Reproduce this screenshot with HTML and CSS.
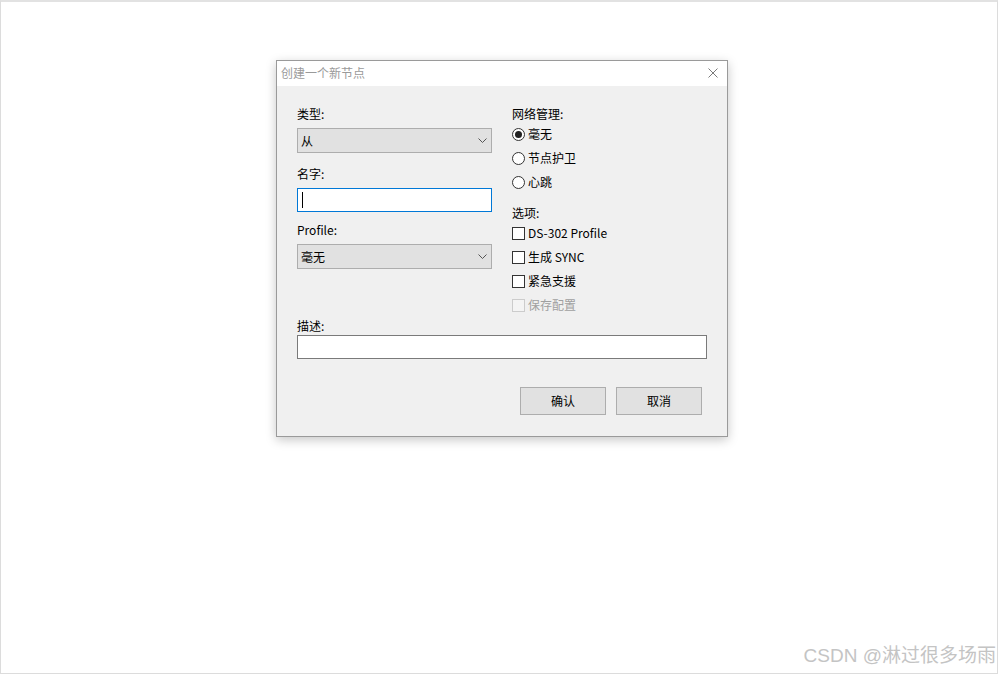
FILE: index.html
```html
<!DOCTYPE html>
<html lang="zh-CN">
<head>
<meta charset="utf-8">
<title>创建一个新节点</title>
<link rel="stylesheet" href="styles.css">
</head>
<body>
<div class="frame">
  <div class="dialog">
    <div class="titlebar">
      <span class="title">创建一个新节点</span>
      <svg class="close" width="10" height="10" viewBox="0 0 10 10"><path d="M0.5 0.5 L9.5 9.5 M9.5 0.5 L0.5 9.5" stroke="#7a7a7a" stroke-width="1" fill="none"/></svg>
    </div>
    <div class="body">
      <div class="cols">
        <div class="col-left">
          <div class="label">类型:</div>
          <div class="select"><span>从</span><svg class="chev" width="9" height="5" viewBox="0 0 9 5"><path d="M0.5 0.5 L4.5 4.5 L8.5 0.5" stroke="#555" stroke-width="1" fill="none"/></svg></div>
          <div class="label l2">名字:</div>
          <div class="input focus"><span class="caret"></span></div>
          <div class="label l3">Profile:</div>
          <div class="select"><span>毫无</span><svg class="chev" width="9" height="5" viewBox="0 0 9 5"><path d="M0.5 0.5 L4.5 4.5 L8.5 0.5" stroke="#555" stroke-width="1" fill="none"/></svg></div>
        </div>
        <div class="col-right">
          <div class="label">网络管理:</div>
          <div class="opt"><span class="radio checked"></span>毫无</div>
          <div class="opt"><span class="radio"></span>节点护卫</div>
          <div class="opt"><span class="radio"></span>心跳</div>
          <div class="label l4">选项:</div>
          <div class="opt"><span class="check"></span>DS-302 Profile</div>
          <div class="opt"><span class="check"></span>生成 SYNC</div>
          <div class="opt"><span class="check"></span>紧急支援</div>
          <div class="opt disabled"><span class="check"></span>保存配置</div>
        </div>
      </div>
      <div class="label desc-label">描述:</div>
      <div class="input desc"></div>
      <div class="buttons">
        <div class="btn">确认</div>
        <div class="btn">取消</div>
      </div>
    </div>
  </div>
  <div class="watermark">CSDN @淋过很多场雨</div>
</div>
</body>
</html>
```

FILE: styles.css
```css
* { box-sizing: border-box; }
html, body { margin: 0; padding: 0; background: #fff; }
body {
  font-family: "Noto Sans CJK SC", sans-serif;
  font-size: 12px;
  color: #000;
}
.frame {
  width: 998px;
  height: 674px;
  border: 1px solid #dcdcdc;
  border-top: 2px solid #e2e2e2;
  display: flex;
  flex-direction: column;
  align-items: flex-start;
}
.dialog {
  margin-top: 58px;
  margin-left: 275px;
  width: 452px;
  height: 377px;
  border: 1px solid #9a9a9a;
  background: #f0f0f0;
  box-shadow: 0 3px 10px rgba(0,0,0,0.22);
  display: flex;
  flex-direction: column;
}
.titlebar {
  height: 25px;
  background: #fff;
  display: flex;
  align-items: center;
  justify-content: space-between;
  padding: 0 9px 1px 4px;
}
.title {
  color: #9a9a9a;
  line-height: 16px;
}
.close { display: block; }
.body {
  padding: 20px 20px 21px 20px;
  display: flex;
  flex-direction: column;
}
.cols {
  display: flex;
  gap: 20px;
  height: 211px;
}
.col-left {
  width: 195px;
  display: flex;
  flex-direction: column;
}
.col-right {
  display: flex;
  flex-direction: column;
}
.label {
  line-height: 16px;
  height: 16px;
}
.col-left .label { margin-bottom: 6px; }
.col-left .l2 { margin-top: 13px; }
.col-left .l3 { margin-top: 10px; }
.col-right .l4 { margin-top: 11px; }
.select {
  height: 25px;
  background: #e1e1e1;
  border: 1px solid #adadad;
  display: flex;
  align-items: center;
  justify-content: space-between;
  padding: 0 3px 0 3px;
  line-height: 16px;
}
.chev { display: block; margin-right: 1px; }
.input {
  height: 24px;
  background: #fff;
  border: 1px solid #7a7a7a;
  display: flex;
  align-items: center;
}
.input.focus { border-color: #0078d7; }
.caret {
  width: 1px;
  height: 16px;
  background: #000;
  margin-left: 4px;
}
.opt {
  height: 24px;
  display: flex;
  align-items: center;
  line-height: 16px;
}
.radio {
  width: 13px;
  height: 13px;
  border: 1px solid #333;
  border-radius: 50%;
  background: #fff;
  margin-right: 3px;
  display: flex;
  align-items: center;
  justify-content: center;
}
.radio.checked::after {
  content: "";
  width: 7px;
  height: 7px;
  border-radius: 50%;
  background: #222;
}
.check {
  width: 13px;
  height: 13px;
  border: 1px solid #333;
  background: #fff;
  margin-right: 3px;
}
.opt.disabled { color: #a0a0a0; }
.opt.disabled .check { border-color: #cccccc; background: #f4f4f4; }
.desc-label { margin-top: 1px; margin-bottom: 1px; }
.input.desc { width: 410px; }
.buttons {
  margin-top: 28px;
  display: flex;
  justify-content: flex-end;
  gap: 10px;
  padding-right: 5px;
}
.btn {
  width: 86px;
  height: 28px;
  background: #e1e1e1;
  border: 1px solid #adadad;
  display: flex;
  align-items: center;
  justify-content: center;
  line-height: 16px;
}
.watermark {
  margin-top: auto;
  align-self: flex-end;
  margin-right: 1px;
  margin-bottom: 6px;
  font-family: "Liberation Sans", "Noto Sans CJK SC", sans-serif;
  font-size: 19px;
  line-height: 22px;
  color: #c4c4c4;
}
```
